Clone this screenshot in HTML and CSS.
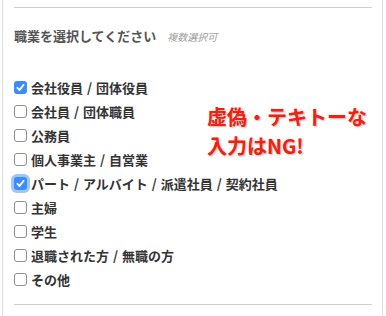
FILE: index.html
```html
<!DOCTYPE html>
<html lang="ja">
<head>
<meta charset="utf-8">
<title>職業</title>
<link rel="stylesheet" href="styles.css">
</head>
<body>
<div class="panel">
  <hr class="rule">
  <div class="label">職業を選択してください<span class="note">複数選択可</span></div>
  <ul class="options">
    <li><span class="box checked"><svg viewBox="0 0 13 13"><path d="M3.4 6.9 L5.5 9 L9.6 3.9"/></svg></span>会社役員 / 団体役員</li>
    <li><span class="box"></span>会社員 / 団体職員</li>
    <li><span class="box"></span>公務員</li>
    <li><span class="box"></span>個人事業主 / 自営業</li>
    <li><span class="box checked focus"><svg viewBox="0 0 13 13"><path d="M3.4 6.9 L5.5 9 L9.6 3.9"/></svg></span>パート / アルバイト / 派遣社員 / 契約社員</li>
    <li><span class="box"></span>主婦</li>
    <li><span class="box"></span>学生</li>
    <li><span class="box"></span>退職された方 / 無職の方</li>
    <li><span class="box"></span>その他</li>
  </ul>
  <hr class="rule bottom">
  <p class="warn">虚偽・テキトーな<br>入力はNG!</p>
</div>
</body>
</html>
```
FILE: styles.css
```css
html, body {
  margin: 0;
  background: #fff;
}
body {
  font-family: "Noto Sans CJK JP", "Noto Sans", sans-serif;
}
.panel {
  position: relative;
  box-sizing: border-box;
  margin-left: 2px;
  width: 381px;
  height: 316px;
  border-left: 1px solid #dedede;
  border-right: 1px solid #dedede;
  padding: 7px 10px 0 11px;
}
.rule {
  border: 0;
  border-top: 1px solid #cfcfcf;
  margin: 0;
  height: 0;
}
.rule.bottom {
  margin-top: 13px;
}
.label {
  margin-top: 18px;
  font-size: 13px;
  line-height: 20px;
  color: #555;
  font-weight: 700;
}
.note {
  margin-left: 11px;
  font-size: 10px;
  font-style: italic;
  font-weight: 400;
  color: #a0a0a0;
}
.options {
  list-style: none;
  margin: 28px 0 0;
  padding: 0;
}
.options li {
  display: flex;
  align-items: center;
  gap: 4px;
  height: 24px;
  font-size: 13px;
  font-weight: 700;
  color: #333;
  word-spacing: 1px;
}
.box {
  box-sizing: border-box;
  flex: none;
  width: 13px;
  height: 13px;
  border: 1px solid #8f8f8f;
  border-radius: 3px;
  background: #fff;
  display: flex;
}
.box.checked {
  border: 0;
  background: #3d8ef4;
}
.box.focus {
  box-shadow: 0 0 0 3px rgba(80, 150, 245, 0.55);
}
.box svg {
  width: 13px;
  height: 13px;
}
.box svg path {
  fill: none;
  stroke: #fff;
  stroke-width: 1.8;
  stroke-linecap: round;
  stroke-linejoin: round;
}
.warn {
  position: absolute;
  left: 204px;
  top: 102px;
  margin: 0;
  font-size: 20px;
  line-height: 29px;
  font-weight: 700;
  color: #f2200f;
  text-shadow: 1px 1px 2px rgba(0, 0, 0, 0.3), 0 0 2px #fff;
}
```
